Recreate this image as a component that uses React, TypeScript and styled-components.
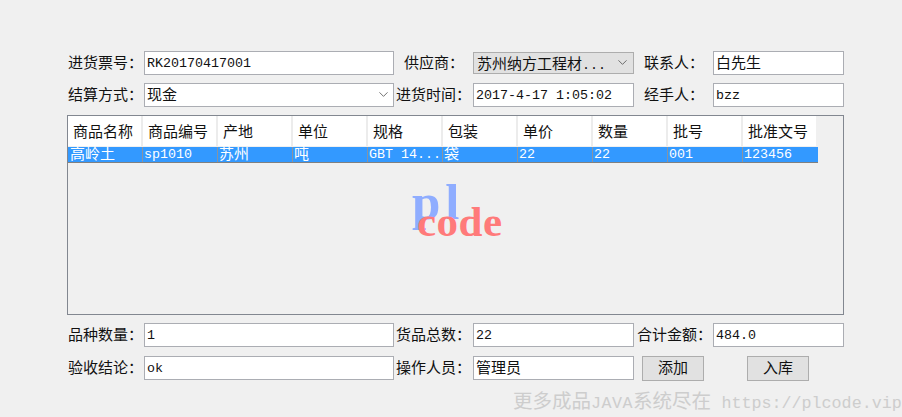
import React from "react";
import styled, { createGlobalStyle } from "styled-components";
import { ChevronDown } from "lucide-react";

const CJK = `"Noto Sans CJK SC", sans-serif`;
const LATIN = `"Liberation Mono", "Noto Sans CJK SC", monospace`;

const Global = createGlobalStyle`
  html, body { margin: 0; padding: 0; background: #f0f0f0; }
  body { width: 902px; height: 417px; overflow: hidden; font-family: ${CJK}; }
`;

const Page = styled.div`
  position: relative;
  box-sizing: border-box;
  width: 902px;
  height: 417px;
  padding: 51px 58px 0 67px;
  background: #f0f0f0;
  color: #111;
`;

const FormRow = styled.div<{ $gap: number }>`
  display: grid;
  grid-template-columns: 77px 250px 79px 161px 79px 131px;
  height: 24px;
  margin-bottom: ${(p) => p.$gap}px;
`;

const Label = styled.div<{ $indent?: number }>`
  padding-left: ${(p) => p.$indent ?? 1}px;
  font-size: 15px;
  line-height: 22px;
  white-space: nowrap;
`;

const Field = styled.div<{ $latin?: boolean }>`
  box-sizing: border-box;
  height: 24px;
  padding-left: 2px;
  background: #fff;
  border: 1px solid #abadb3;
  font-family: ${(p) => (p.$latin ? LATIN : CJK)};
  font-size: ${(p) => (p.$latin ? 13.33 : 15)}px;
  line-height: ${(p) => (p.$latin ? 23 : 20)}px;
  white-space: nowrap;
  overflow: hidden;
`;

const Combo = styled(Field)`
  display: flex;
  justify-content: space-between;
  align-items: flex-start;
  padding-right: 2px;
  svg { flex: none; margin-top: 3px; color: #444; }
`;

const DisabledCombo = styled(Combo)`
  height: 22px;
  margin-top: 1px;
  padding-left: 3px;
  background: #e1e1e1;
  border-color: #adadad;
  line-height: 19px;
  svg { margin-top: 2px; margin-right: 1px; }
`;

const Dots = styled.span`
  font-family: ${LATIN};
  font-size: 13.33px;
`;

const Grid = styled.div`
  box-sizing: border-box;
  width: 777px;
  height: 200px;
  margin-bottom: 8px;
  background: #f0f0f0;
  border: 1px solid #828790;
  display: flex;
  flex-direction: column;
  position: relative;
`;

const HeaderRow = styled.div`
  display: flex;
  width: 748px;
  height: 30px;
  margin-bottom: 1px;
  background: #fff;
`;

const HeaderCell = styled.div`
  box-sizing: border-box;
  flex: 0 0 75px;
  padding-left: 5px;
  border-right: 2px solid #ececec;
  font-size: 15px;
  line-height: 29px;
  white-space: nowrap;
  &:last-child { flex: 0 0 73px; border-right: 0; }
`;

const DataRow = styled.div`
  display: flex;
  box-sizing: border-box;
  width: 750px;
  height: 16px;
  background: #3399ff;
  border-bottom: 1px solid #808080;
  color: #fff;
`;

const DataCell = styled.div<{ $latin?: boolean }>`
  box-sizing: border-box;
  flex: 0 0 75px;
  padding-left: 1px;
  border-right: 1px solid #8a94a0;
  font-family: ${(p) => (p.$latin ? LATIN : CJK)};
  font-size: ${(p) => (p.$latin ? 13.33 : 15)}px;
  line-height: ${(p) => (p.$latin ? 16 : 12)}px;
  white-space: nowrap;
  &:first-child { padding-left: 2px; }
  &:last-child { border-right: 0; }
`;

const Logo = styled.div`
  position: absolute;
  left: 344px;
  top: 62px;
  width: 100px;
  height: 70px;
  font-family: "Liberation Serif", serif;
  font-weight: bold;
`;

const LogoTop = styled.span`
  position: absolute;
  left: 0;
  top: -1px;
  font-size: 51px;
  line-height: 51px;
  letter-spacing: 5px;
  color: #8fadff;
`;

const LogoBottom = styled.span`
  position: absolute;
  left: 5px;
  top: 22px;
  font-size: 43px;
  line-height: 43px;
  letter-spacing: 0.5px;
  color: #ff7a7a;
`;

const Actions = styled.div`
  grid-column: span 2;
  display: flex;
  gap: 43px;
  padding-left: 8px;
`;

const Button = styled.button`
  box-sizing: border-box;
  width: 62px;
  height: 25px;
  padding: 0 0 3px;
  background: #e1e1e1;
  border: 1px solid #adadad;
  color: #111;
  font-family: ${CJK};
  font-size: 15px;
  line-height: 20px;
`;

const Watermark = styled.div`
  position: absolute;
  left: 513px;
  top: 387px;
  color: #cdcdcd;
  font-family: ${CJK};
  font-size: 19.5px;
  line-height: 26px;
  white-space: nowrap;
`;

const WatermarkLatin = styled.span<{ $gapLeft?: number; $track?: number }>`
  margin-left: ${(p) => p.$gapLeft ?? 0}px;
  font-family: ${LATIN};
  font-size: 16.7px;
  letter-spacing: ${(p) => p.$track ?? 0}px;
`;

const columns = ["商品名称", "商品编号", "产地", "单位", "规格", "包装", "单价", "数量", "批号", "批准文号"];
const row: { text: string; latin?: boolean }[] = [
  { text: "高岭土" },
  { text: "sp1010", latin: true },
  { text: "苏州" },
  { text: "吨" },
  { text: "GBT 14...", latin: true },
  { text: "袋" },
  { text: "22", latin: true },
  { text: "22", latin: true },
  { text: "001", latin: true },
  { text: "123456", latin: true },
];

export default function App() {
  return (
    <Page>
      <Global />
      <FormRow $gap={8}>
        <Label>进货票号：</Label>
        <Field $latin>RK20170417001</Field>
        <Label $indent={10}>供应商：</Label>
        <DisabledCombo>
          <span>
            苏州纳方工程材<Dots>...</Dots>
          </span>
          <ChevronDown size={15} strokeWidth={1.2} />
        </DisabledCombo>
        <Label $indent={10}>联系人：</Label>
        <Field>白先生</Field>
      </FormRow>
      <FormRow $gap={8}>
        <Label>结算方式：</Label>
        <Combo>
          现金
          <ChevronDown size={15} strokeWidth={1.2} />
        </Combo>
        <Label $indent={2}>进货时间：</Label>
        <Field $latin>2017-4-17 1:05:02</Field>
        <Label $indent={10}>经手人：</Label>
        <Field $latin>bzz</Field>
      </FormRow>
      <Grid>
        <HeaderRow>
          {columns.map((c) => (
            <HeaderCell key={c}>{c}</HeaderCell>
          ))}
        </HeaderRow>
        <DataRow>
          {row.map((c, i) => (
            <DataCell key={i} $latin={c.latin}>
              {c.text}
            </DataCell>
          ))}
        </DataRow>
        <Logo>
          <LogoTop>pl</LogoTop>
          <LogoBottom>code</LogoBottom>
        </Logo>
      </Grid>
      <FormRow $gap={9}>
        <Label>品种数量：</Label>
        <Field $latin>1</Field>
        <Label $indent={2}>货品总数：</Label>
        <Field $latin>22</Field>
        <Label $indent={3}>合计金额：</Label>
        <Field $latin>484.0</Field>
      </FormRow>
      <FormRow $gap={0}>
        <Label>验收结论：</Label>
        <Field $latin>ok</Field>
        <Label $indent={2}>操作人员：</Label>
        <Field>管理员</Field>
        <Actions>
          <Button>添加</Button>
          <Button>入库</Button>
        </Actions>
      </FormRow>
      <Watermark>
        更多成品<WatermarkLatin $track={0.5}>JAVA</WatermarkLatin>系统尽在 <WatermarkLatin $gapLeft={6}>https://plcode.vip</WatermarkLatin>
      </Watermark>
    </Page>
  );
}
